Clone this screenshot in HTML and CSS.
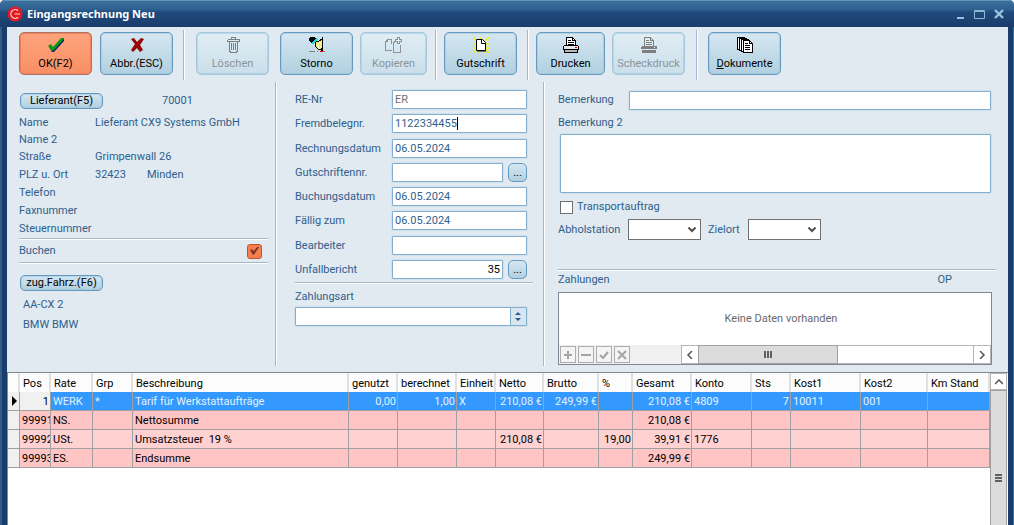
FILE: index.html
```html
<!DOCTYPE html>
<html lang="de">
<head>
	<meta charset="UTF-8">
	<title>Eingangsrechnung Neu</title>
	<link rel="stylesheet" href="styles.css">
</head>
<body>
<div class="window">
	<header class="titlebar">
		<svg class="logo" width="16" height="16" viewBox="0 0 16 16">
			<circle cx="8" cy="8" r="7.5" fill="#e01b24"/>
			<path d="M11 4.800A4.300 4.300 0 1 0 11 11.200M7.500 8H13" fill="none" stroke="#fbd0d0" stroke-width="1.200"/>
		</svg>
		<h1>Eingangsrechnung Neu</h1>
		<div class="win_btns">
			<button type="button" aria-label="Minimieren"><svg width="12" height="12" viewBox="0 0 12 12"><path d="M2 9h7v2h-7z" fill="#9cc3de"/></svg></button>
			<button type="button" aria-label="Maximieren"><svg width="12" height="12" viewBox="0 0 12 12"><path d="M.5 2.5h10v8h-10zM.5 3.5h10" fill="none" stroke="#8db8d6"/></svg></button>
			<button type="button" aria-label="Schließen"><svg width="12" height="12" viewBox="0 0 12 12"><path d="M2 2l8 8M10 2l-8 8" fill="none" stroke="#9cc3de" stroke-width="2.4"/></svg></button>
		</div>
	</header>

	<div class="client">
		<div class="toolbar">
			<button type="button" class="tool ok">
				<svg width="16" height="16" viewBox="0 0 16 16"><path d="M1 10l2-1 2 3 9-10h2v2L6 15H4z" fill="#00207a"/><path d="M0 9l3-2 2 3 8-9h3v1L5 14H4z" fill="#0a9a10"/></svg>
				<span>OK(F2)</span>
			</button>
			<button type="button" class="tool">
				<svg width="16" height="16" viewBox="0 0 16 16"><path d="M2 2l3-1 3 4 4-4 3 1-4 6 3 5-3 2-3-4-4 4-2-2 4-6z" fill="#8c0000"/><path d="M3 2l9 12M13 2L3 13" stroke="#c40000" stroke-width="1" fill="none"/></svg>
				<span>Abbr.(ESC)</span>
			</button>
			<i class="sep"></i>
			<button type="button" class="tool" disabled>
				<svg width="16" height="16" viewBox="0 0 16 16" shape-rendering="crispEdges"><path d="M6.500 1.500v-1h4v1M2.500 2.500h12M2.500 4.500h12M2.500 2.500v2M14.500 2.500v2M4.500 5v8.500l1 2h6l1-2v-8.500M6.500 6v7M8.500 6v7M10.500 6v7" fill="none" stroke="#7f7f7f"/></svg>
				<span>Löschen</span>
			</button>
			<button type="button" class="tool">
				<svg width="16" height="16" viewBox="0 0 16 16" shape-rendering="crispEdges"><path d="M6 5l4-1 3-2v10l-3 1-3-3z" fill="#f5ea6a" stroke="#000"/><path d="M8 6l4 4M10 5l2 2M8 8l3 4" fill="none" stroke="#fff" stroke-dasharray="1 1"/><path d="M1 0h4l2 2-4 4-3-2v-3z" fill="#000"/><path d="M3 7l5-5" stroke="#20d8e0" stroke-width="2"/><path d="M13 0h1v14h-2v-3h1z" fill="#000"/><path d="M11 14h3v1h-3z" fill="#e00000"/><path d="M0 14.500h6M8 14.500h1M14 14.500h2" stroke="#808080"/></svg>
				<span>Storno</span>
			</button>
			<button type="button" class="tool slim" disabled>
				<svg width="18" height="16" viewBox="0 0 18 16" shape-rendering="crispEdges"><path d="M7 13.500h-6.500v-9l2-2h4v4M2.500 2.500v2h-2M8 15.500v-9l2-2h2M8 15.500h7.500v-8" fill="none" stroke="#909090"/><path d="M12.500 .5h2v2h2v2h-2v2h-2v-2h-2v-2h2z" fill="#e8f2f7" stroke="#909090"/></svg>
				<span>Kopieren</span>
			</button>
			<i class="sep"></i>
			<button type="button" class="tool">
				<svg width="16" height="16" viewBox="0 0 16 16"><path d="M0 0l16 16M16 0L0 16M8 0v3M0 7h16M1 11h15M6 13v3M12 12v4" stroke="#f7f000" stroke-width="1.500"/><path d="M3.500 2.500h6l3 3v8h-9z" fill="#fff" stroke="#000"/><path d="M8.500 2.500v4h4" fill="none" stroke="#000"/><path d="M4 14.500h9.500" stroke="#777"/></svg>
				<span>Gutschrift</span>
			</button>
			<i class="sep"></i>
			<button type="button" class="tool narrow">
				<svg width="16" height="16" viewBox="0 0 16 16" shape-rendering="crispEdges"><path d="M3.500 8.500v-8h6l3 3v5" fill="#fff" stroke="#000"/><path d="M9.500 .5v3h3M5 3.500h3M5 5.500h6M5 7.500h6" fill="none" stroke="#000"/><path d="M.5 9.500l1-1h13l1 1v3h-15z" fill="#e8e8e8" stroke="#000"/><path d="M1.500 12.500h13v3h-13z" fill="#b8b8b8" stroke="#000"/><path d="M12 10h2v1h-2z" fill="#e00000"/></svg>
				<span>Drucken</span>
			</button>
			<button type="button" class="tool" disabled>
				<svg width="16" height="16" viewBox="0 0 16 16" shape-rendering="crispEdges"><path d="M3.500 8.500v-8h6l3 3v5M9.500 .5v3h3M5 3.500h3M5 5.500h6M5 7.500h6" fill="none" stroke="#7f7f7f"/><path d="M1 9h14l1 1v2h-16v-2zM1 13h14v3h-14z" fill="#7f7f7f"/><path d="M13 10h1v1h-1z" fill="#fff"/></svg>
				<span>Scheckdruck</span>
			</button>
			<i class="sep"></i>
			<button type="button" class="tool">
				<svg width="16" height="16" viewBox="0 0 16 16" shape-rendering="crispEdges"><path d="M.5 .5h7v12h-7z" fill="#fff" stroke="#000"/><path d="M2.500 1.500h7v12h-7z" fill="#fff" stroke="#000"/><path d="M4.500 2.500h7v12h-7z" fill="#fff" stroke="#000"/><path d="M6.500 3.500h6l3 3v9h-9z" fill="#fff" stroke="#000"/><path d="M12.500 3.500v3h3M8 6.500h3M8 8.500h5M8 10.500h5M8 12.500h5" fill="none" stroke="#000"/></svg>
				<span><u>D</u>okumente</span>
			</button>
		</div>

		<div class="form">
			<section class="supplier">
				<div class="supplier_head">
					<button type="button" class="pill">Lieferant(F5)</button>
					<span>70001</span>
				</div>
				<dl class="address">
					<dt>Name</dt><dd>Lieferant CX9 Systems GmbH</dd>
					<dt>Name 2</dt><dd></dd>
					<dt>Straße</dt><dd>Grimpenwall 26</dd>
					<dt>PLZ u. Ort</dt><dd><span class="zip">32423</span>Minden</dd>
					<dt>Telefon</dt><dd></dd>
					<dt>Faxnummer</dt><dd></dd>
					<dt>Steuernummer</dt><dd></dd>
				</dl>
				<div class="book">
					<label for="buchen">Buchen</label>
					<input type="checkbox" id="buchen" checked>
				</div>
				<button type="button" class="pill">zug.Fahrz.(F6)</button>
				<div class="vehicle">
					<p>AA-CX 2</p>
					<p>BMW BMW</p>
				</div>
			</section>

			<section class="invoice">
				<div class="fields">
					<label for="renr">RE-Nr</label>
					<input type="text" id="renr" class="field muted" value="ER">
					<label for="fremd">Fremdbelegnr.</label>
					<div class="edit">
						<input type="text" id="fremd" class="field" value="1122334455">
						<i class="caret"></i>
					</div>
					<label for="redatum">Rechnungsdatum</label>
					<input type="text" id="redatum" class="field" value="06.05.2024">
					<label for="gutschrift">Gutschriftennr.</label>
					<div class="lookup">
						<input type="text" id="gutschrift" class="field">
						<button type="button">...</button>
					</div>
					<label for="budatum">Buchungsdatum</label>
					<input type="text" id="budatum" class="field" value="06.05.2024">
					<label for="faellig">Fällig zum</label>
					<input type="text" id="faellig" class="field" value="06.05.2024">
					<label for="bearbeiter">Bearbeiter</label>
					<input type="text" id="bearbeiter" class="field">
					<label for="unfall">Unfallbericht</label>
					<div class="lookup">
						<input type="text" id="unfall" class="field number" value="35">
						<button type="button">...</button>
					</div>
				</div>
				<div class="payment">
					<label for="zahlungsart">Zahlungsart</label>
					<select id="zahlungsart" class="field spin"><option></option></select>
				</div>
			</section>

			<section class="remarks">
				<div class="remark_row">
					<label for="bem">Bemerkung</label>
					<input type="text" id="bem" class="field">
				</div>
				<label for="bem2" class="remark_label">Bemerkung 2</label>
				<textarea id="bem2" class="field area"></textarea>
				<div class="transport">
					<input type="checkbox" id="transport">
					<label for="transport">Transportauftrag</label>
				</div>
				<div class="stations">
					<label for="abhol">Abholstation</label>
					<select id="abhol" class="drop"><option></option></select>
					<label for="ziel">Zielort</label>
					<select id="ziel" class="drop"><option></option></select>
				</div>
				<div class="pay_head"><span>Zahlungen</span><span>OP</span></div>
				<div class="pay_box">
					<p>Keine Daten vorhanden</p>
					<div class="pay_foot">
						<div class="nav">
							<button type="button" aria-label="Hinzufügen" disabled><svg width="10" height="10" viewBox="0 0 10 10"><path d="M5 1v8M1 5h8" stroke="#a5a5a5" stroke-width="2"/></svg></button>
							<button type="button" aria-label="Löschen" disabled><svg width="10" height="10" viewBox="0 0 10 10"><path d="M0 5h10" stroke="#a5a5a5" stroke-width="2"/></svg></button>
							<button type="button" aria-label="Übernehmen" disabled><svg width="10" height="10" viewBox="0 0 10 10"><path d="M1 5l3 3 5-6" fill="none" stroke="#a5a5a5" stroke-width="2"/></svg></button>
							<button type="button" aria-label="Abbrechen" disabled><svg width="10" height="10" viewBox="0 0 10 10"><path d="M1 1l8 8M9 1l-8 8" stroke="#a5a5a5" stroke-width="2"/></svg></button>
						</div>
						<div class="hscroll">
							<button type="button" aria-label="Nach links"><svg width="8" height="8" viewBox="0 0 8 8"><path d="M6 0L2 4l4 4" fill="none" stroke="#505050" stroke-width="1.500"/></svg></button>
							<div class="thumb"><i></i><i></i><i></i></div>
							<div class="track"></div>
							<button type="button" aria-label="Nach rechts"><svg width="8" height="8" viewBox="0 0 8 8"><path d="M2 0l4 4-4 4" fill="none" stroke="#505050" stroke-width="1.500"/></svg></button>
						</div>
					</div>
				</div>
			</section>
		</div>

		<div class="grid">
			<table>
				<colgroup>
					<col class="w_mark"><col class="w_pos"><col class="w_rate"><col class="w_grp"><col>
					<col class="w_used"><col class="w_calc"><col class="w_sts"><col class="w_net"><col class="w_gross">
					<col class="w_pct"><col class="w_total"><col class="w_acc"><col class="w_sts"><col class="w_cost1">
					<col class="w_cost2"><col class="w_km">
				</colgroup>
				<thead>
					<tr><th></th><th>Pos</th><th>Rate</th><th>Grp</th><th>Beschreibung</th><th>genutzt</th><th>berechnet</th><th>Einheit</th><th>Netto</th><th>Brutto</th><th>%</th><th>Gesamt</th><th>Konto</th><th>Sts</th><th>Kost1</th><th>Kost2</th><th>Km Stand</th></tr>
				</thead>
				<tbody>
					<tr class="active"><td class="mark"><svg width="6" height="10" viewBox="0 0 6 10"><path d="M0 0l5 5-5 5z" fill="#000"/></svg></td><td class="pos num">1</td><td>WERK</td><td>*</td><td>Tarif für Werkstattaufträge</td><td class="num">0,00</td><td class="num">1,00</td><td>X</td><td class="num">210,08 €</td><td class="num">249,99 €</td><td></td><td class="num">210,08 €</td><td>4809</td><td class="num">7</td><td>10011</td><td>001</td><td></td></tr>
					<tr><td class="mark"></td><td>99991</td><td>NS.</td><td></td><td>Nettosumme</td><td></td><td></td><td></td><td></td><td></td><td></td><td class="num">210,08 €</td><td></td><td></td><td></td><td></td><td></td></tr>
					<tr><td class="mark"></td><td>99992</td><td>USt.</td><td></td><td>Umsatzsteuer&nbsp; 19 %</td><td></td><td></td><td></td><td class="num">210,08 €</td><td></td><td class="num">19,00</td><td class="num">39,91 €</td><td>1776</td><td></td><td></td><td></td><td></td></tr>
					<tr><td class="mark"></td><td>99993</td><td>ES.</td><td></td><td>Endsumme</td><td></td><td></td><td></td><td></td><td></td><td></td><td class="num">249,99 €</td><td></td><td></td><td></td><td></td><td></td></tr>
				</tbody>
			</table>
			<div class="vscroll">
				<button type="button" aria-label="Nach oben"><svg width="8" height="8" viewBox="0 0 8 8"><path d="M0 6l4-4 4 4" fill="none" stroke="#505050" stroke-width="1.500"/></svg></button>
				<div class="thumb"><i></i><i></i><i></i></div>
			</div>
		</div>
	</div>
</div>
</body>
</html>
```

FILE: styles.css
```css
*{
	margin:0;
	padding:0;
	box-sizing:border-box;
}
body{
	font-family:Roboto, "Liberation Sans", sans-serif;
	font-size:11px;
	line-height:18px;
	color:#2f5f8c;
	background:#fff;
}
button, input, select, textarea{
	font:inherit;
	color:inherit;
}
.window{
	height:100vh;
	display:flex;
	flex-direction:column;
	overflow:hidden;
	padding:0 6px 0 7px;
	background:#193c6b;
	border-radius:5px 5px 0 0;
	box-shadow:inset 2px 0 #2f5d8c, inset -1px 0 #2f6d9f;
}

/* title bar */
.titlebar{
	height:27px;
	flex:none;
	display:flex;
	align-items:center;
	gap:4px;
	margin:0 -6px 0 -7px;
	padding:0 9px 1px 7px;
	border-top:1px solid #5f97bb;
	border-radius:5px 5px 0 0;
	background:linear-gradient(#3b6f9c 0%, #2f6292 30%, #1f4a7c 45%, #193c6b 100%);
}
.titlebar h1{
	font:bold 11px/16px "Noto Sans", sans-serif;
	color:#fff;
}
.win_btns{
	margin-left:auto;
	display:flex;
	gap:7px;
}
.win_btns button{
	width:12px;
	height:12px;
	border:0;
	background:none;
}
.win_btns svg{
	display:block;
}
.client{
	flex:1;
	min-height:0;
	display:flex;
	flex-direction:column;
	background:#e1e9f1;
}

/* toolbar */
.toolbar{
	display:grid;
	grid-template-columns:81px 83px 13px 84px 80px 75px 9px 83px 9px 76px 84px 12px 73px;
	height:54px;
	padding:3px 12px 0;
}
.sep{
	width:2px;
	height:50px;
	background:#a3b8ce;
	border-right:1px solid #fff;
}
.tool{
	width:73px;
	height:43px;
	margin-top:2px;
	display:flex;
	flex-direction:column;
	align-items:center;
	gap:2px;
	padding-top:4px;
	border:1px solid #6599c0;
	border-radius:5px;
	background:linear-gradient(#d5e7f1 0%, #c5dce9 45%, #b1d0e1 100%);
	box-shadow:inset 0 0 0 1px rgba(150, 195, 222, .5);
	color:#000;
}
.tool svg{
	flex:none;
}
.tool.ok{
	border-color:#ae7564;
	background:linear-gradient(#ffa37e, #f88f64);
	box-shadow:inset 0 0 0 1px #f08058;
}
.tool.slim{
	width:67px;
}
.tool.narrow{
	width:69px;
}
.tool:disabled{
	border-color:#a5c8dd;
	background:linear-gradient(#e0edf4, #cadfea);
	color:#8b9499;
}

/* form */
.form{
	display:grid;
	grid-template-columns:270px 268px 1fr;
	height:291px;
	padding-top:1px;
	padding-bottom:6px;
}
.supplier, .invoice{
	border-right:1px solid #fff;
	box-shadow:inset -1px 0 #a3b8ce;
}
.supplier{
	padding:11px 8px 0 12px;
}
.pill{
	display:block;
	width:83px;
	height:16px;
	margin-left:1px;
	line-height:14px;
	border:1px solid #6599c0;
	border-radius:5px;
	background:linear-gradient(#d5e7f1, #b1d0e1);
	box-shadow:inset 0 0 0 1px rgba(150, 195, 222, .5);
	color:#000;
}
.supplier_head{
	display:flex;
	gap:59px;
	line-height:16px;
}
.address{
	display:grid;
	grid-template-columns:76px 1fr;
	grid-template-rows:17px 17px repeat(5, 18px);
	margin-top:5px;
}
.zip{
	display:inline-block;
	width:52px;
}
.book{
	display:flex;
	align-items:center;
	justify-content:space-between;
	height:26px;
	margin-bottom:11px;
	padding-right:6px;
	border-top:1px solid #a3b8ce;
	border-bottom:1px solid #fff;
	box-shadow:inset 0 1px #fff, inset 0 -1px #a3b8ce;
}
.book input{
	appearance:none;
	width:15px;
	height:15px;
	border:1px solid #c0552c;
	border-radius:3px;
	background:#f67f50;
}
.book input:checked::before{
	content:"";
	display:block;
	width:9px;
	height:8px;
	margin:2px;
	background:#7a3524;
	clip-path:polygon(0 40%, 25% 35%, 40% 60%, 85% 0, 100% 10%, 45% 100%, 30% 100%);
}
.vehicle{
	padding:4px 4px 0;
	line-height:20px;
}
.invoice{
	padding:8px 11px 0 18px;
}
.fields{
	display:grid;
	grid-template-columns:97px 135px;
	grid-template-rows:24px 25px 24px 24px 24px 25px 24px 22px;
	line-height:20px;
	border-bottom:1px solid #a3b8ce;
	box-shadow:0 1px #fff;
}
.field{
	width:100%;
	height:19px;
	padding:0 2px;
	border:1px solid #82afce;
	border-radius:1px;
	background:#fff;
	box-shadow:0 0 0 1px rgba(190, 217, 233, .45);
	outline:0;
}
.muted{
	color:#707070;
}
.number{
	color:#000;
	text-align:right;
}
.edit{
	position:relative;
}
.caret{
	position:absolute;
	top:3px;
	left:65px;
	width:1px;
	height:13px;
	background:#000;
}
.edit .field, .lookup .field{
	display:block;
}
.lookup{
	display:flex;
	gap:5px;
}
.lookup button{
	flex:none;
	width:19px;
	height:19px;
	line-height:16px;
	border:1px solid #6599c0;
	border-radius:5px;
	background:linear-gradient(#d5e7f1, #b1d0e1);
	color:#000;
}
.payment{
	display:grid;
	padding:5px 6px 0 0;
	gap:1px;
}
.spin{
	appearance:none;
	background:#fff url("data:image/svg+xml,%3Csvg xmlns='http://www.w3.org/2000/svg' width='16' height='17'%3E%3Cpath d='M0 0h16v17H0z' fill='%23d9e5ef'/%3E%3Cpath d='M.5 0v17' stroke='%2382afce'/%3E%3Cpath d='M5 7l3-3 3 3zM5 10l3 3 3-3z' fill='%23265c94'/%3E%3C/svg%3E") right center no-repeat;
}

/* remarks and payments */
.remarks{
	padding:9px 12px 0 13px;
}
.remark_row{
	display:grid;
	grid-template-columns:71px 1fr;
	padding-right:5px;
}
.remark_label{
	display:block;
	margin:4px 0 2px;
}
.area{
	display:block;
	width:calc(100% - 7px);
	height:59px;
	margin-left:2px;
	resize:none;
}
.transport{
	display:flex;
	align-items:center;
	gap:4px;
	height:18px;
	margin-top:5px;
	padding-left:2px;
}
.transport input{
	appearance:none;
	width:13px;
	height:13px;
	border:1px solid #707070;
	background:#fff;
}
.stations{
	display:grid;
	grid-template-columns:70px 73px 47px 73px;
	align-items:center;
	margin-top:3px;
}
.stations .drop + label{
	padding-left:7px;
}
.drop{
	appearance:none;
	height:21px;
	border:1px solid #707070;
	background:#fff url("data:image/svg+xml,%3Csvg xmlns='http://www.w3.org/2000/svg' width='8' height='6'%3E%3Cpath d='M.5 .5L4 4l3.500-3.500' fill='none' stroke='%23505050' stroke-width='2'/%3E%3C/svg%3E") right 4px center no-repeat;
}
.pay_head{
	display:flex;
	justify-content:space-between;
	height:23px;
	margin-top:29px;
	padding:1px 44px 0 0;
	border-top:1px solid #a3b8ce;
	box-shadow:inset 0 1px #fff;
}
.pay_box{
	display:flex;
	flex-direction:column;
	height:73px;
	margin-right:4px;
	border:1px solid #828790;
	background:#fff;
}
.pay_box p{
	flex:1;
	display:flex;
	align-items:center;
	justify-content:center;
	padding-left:12px;
	color:#6a6a6a;
}
.pay_foot{
	display:flex;
	height:19px;
	background:#f0f0f0;
}
.nav{
	flex:none;
	display:flex;
	gap:2px;
	width:122px;
	padding:1px;
}
.nav button{
	display:flex;
	align-items:center;
	justify-content:center;
	width:16px;
	height:17px;
	border:1px solid #adadad;
	background:#f4f4f4;
}
.hscroll{
	flex:1;
	display:flex;
	background:#fff;
	border:1px solid #b5b5b5;
}
.hscroll button, .vscroll button{
	display:flex;
	align-items:center;
	justify-content:center;
	width:16px;
	border:0;
	background:#fff;
}
.thumb{
	display:flex;
	align-items:center;
	justify-content:center;
	gap:1px;
	background:#dcdcdc;
	border:1px solid #a0a0a0;
}
.hscroll .thumb{
	width:140px;
	margin:-1px 0;
}
.hscroll .thumb i{
	width:2px;
	height:7px;
	background:#606060;
}
.hscroll .track{
	flex:1;
	border-right:1px solid #b5b5b5;
}

/* positions */
.grid{
	flex:1;
	min-height:0;
	display:flex;
	align-items:flex-start;
	background:#fff;
	border:1px solid #828790;
	border-width:1px 0 0 1px;
	color:#000;
}
table{
	flex:1;
	width:100%;
	table-layout:fixed;
	border-spacing:0;
}
th, td{
	height:19px;
	padding:0 2px;
	line-height:17px;
	text-align:left;
	white-space:nowrap;
	overflow:hidden;
	border-right:1px solid #a0a0a0;
	border-bottom:1px solid #a0a0a0;
}
th{
	padding:1px 0 0 3px;
	font-weight:normal;
	background:#fcfcfc;
	border-right:2px solid #e0e0e0;
	border-bottom:0;
}
tbody tr{
	background:#ffd1d1;
}
tbody tr:nth-child(even){
	background:#ffc5c5;
}
tbody .active{
	background:#3399ff;
	color:#e4f1fd;
}
.mark, .active .pos{
	background:#f0f0f0;
	color:#000;
}
.mark{
	padding:0 4px;
}
.mark svg{
	display:block;
}
td.num{
	padding:0 1px;
	text-align:right;
}
.w_mark{ width:12px; }
.w_pos{ width:31px; }
.w_rate{ width:42px; }
.w_grp{ width:40px; }
.w_used{ width:49px; }
.w_calc{ width:59px; }
.w_sts{ width:39px; }
.w_net{ width:48px; }
.w_gross{ width:55px; }
.w_pct{ width:34px; }
.w_total{ width:59px; }
.w_acc{ width:60px; }
.w_cost1{ width:70px; }
.w_cost2{ width:67px; }
.w_km{ width:62px; }
.vscroll{
	flex:none;
	align-self:stretch;
	width:18px;
	overflow:hidden;
}
.vscroll button{
	width:17px;
	height:17px;
	border:1px solid #b5b5b5;
}
.vscroll .thumb{
	flex-direction:column;
	width:17px;
	height:176px;
}
.vscroll .thumb i{
	width:7px;
	height:2px;
	background:#606060;
}
```
